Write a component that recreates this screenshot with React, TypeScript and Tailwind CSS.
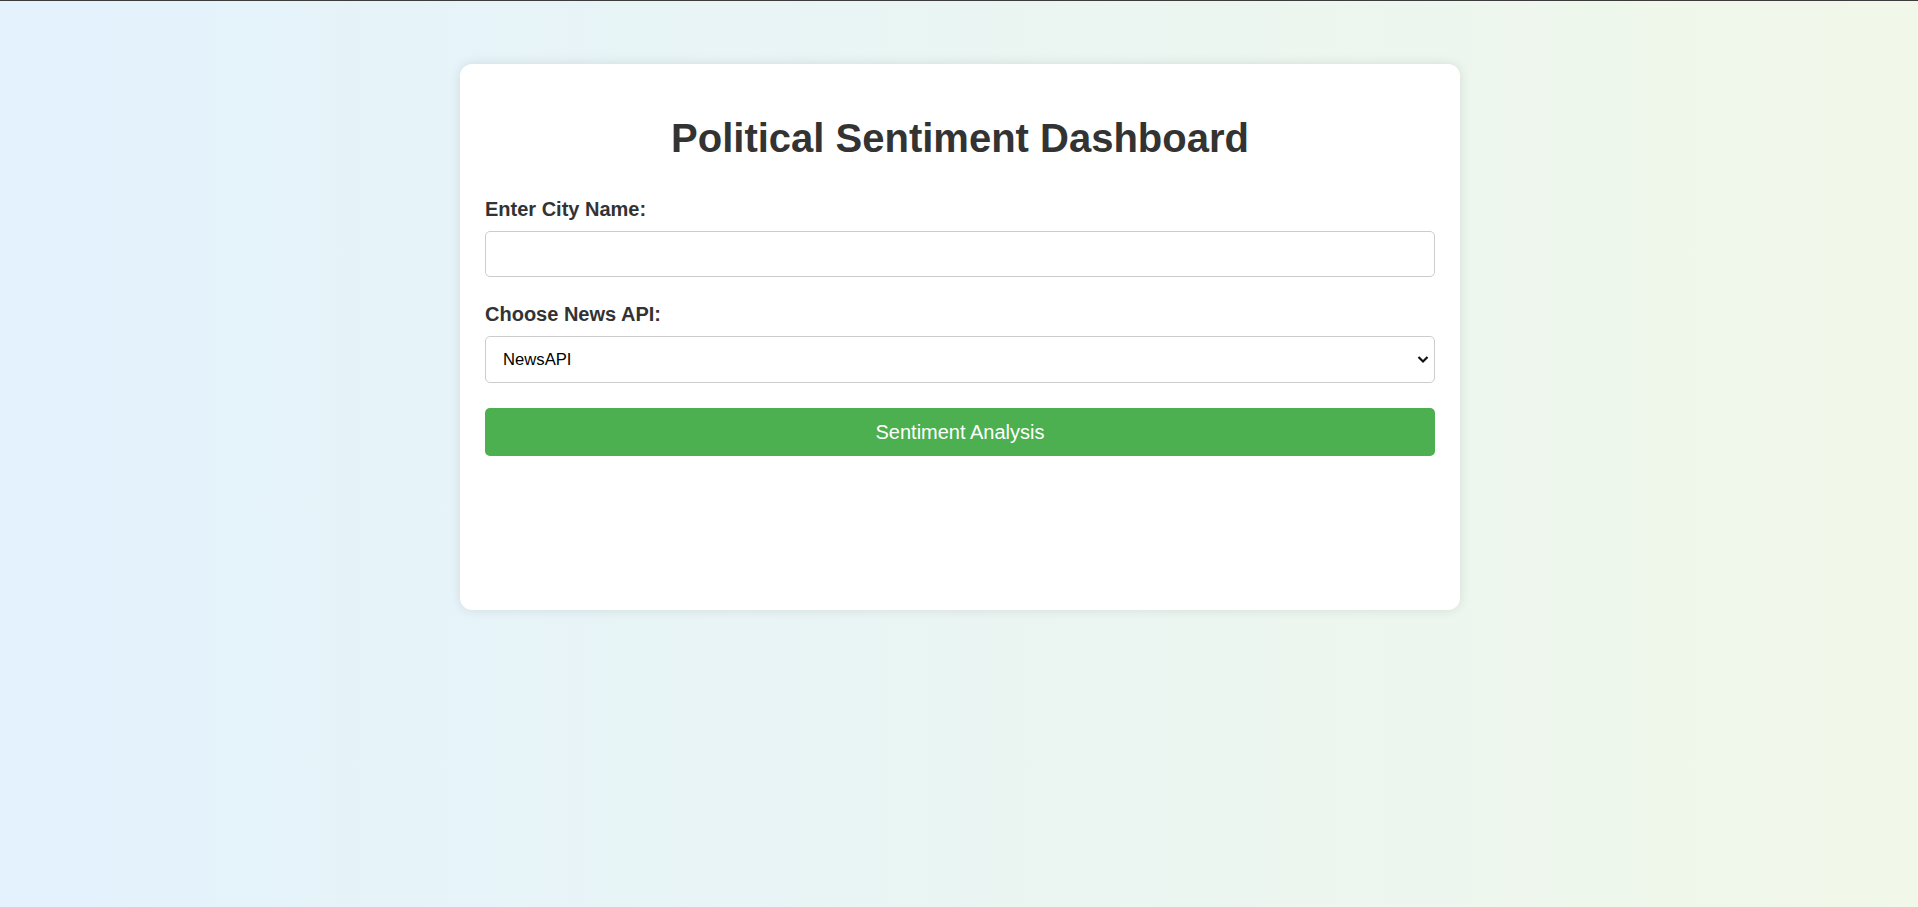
import { useState } from 'react';

export default function App() {
    const [city, setCity] = useState('');
    const [api, setApi] = useState('newsapi');

    return (
        <div className="min-h-screen w-full border-t border-[#3c3c3c] bg-gradient-to-r from-[#e3f2fd] to-[#f1f8e9] pt-[63px] pl-[2px] font-['Liberation_Sans',Arial,sans-serif] text-[#333]">
            <div className="mx-auto flex h-[546px] w-[1000px] flex-col rounded-[12px] bg-white px-[25px] pt-[25px] shadow-[0_0_12px_rgba(0,0,0,0.1)]">
                <h1 className="mt-[26px] mb-[27px] text-center text-[40px] font-bold leading-[46px]">
                    Political Sentiment Dashboard
                </h1>

                <label htmlFor="city" className="mt-[10px] mb-[10px] block text-[20px] font-bold leading-[23px]">
                    Enter City Name:
                </label>
                <input
                    id="city"
                    type="text"
                    value={city}
                    onChange={e => setCity(e.target.value)}
                    className="h-[46px] w-full rounded-[5px] border border-[#ccc] px-[12px] text-[16.67px] text-black outline-none"
                />

                <label htmlFor="api" className="mt-[26px] mb-[10px] block text-[20px] font-bold leading-[23px]">
                    Choose News API:
                </label>
                <div className="relative">
                    <select
                        id="api"
                        value={api}
                        onChange={e => setApi(e.target.value)}
                        className="h-[47px] w-full appearance-none rounded-[5px] border border-[#ccc] bg-white pl-[17px] text-[16.67px] text-black outline-none"
                    >
                        <option value="newsapi">NewsAPI</option>
                        <option value="gnews">GNews</option>
                    </select>
                    <svg
                        className="pointer-events-none absolute right-[6px] top-[19px]"
                        width="12"
                        height="9"
                        viewBox="0 0 12 9"
                        fill="none"
                    >
                        <path d="M1.5 2 L6 6.5 L10.5 2" stroke="#111" strokeWidth="2.2" />
                    </svg>
                </div>

                <button
                    type="button"
                    className="mt-[25px] flex h-[48px] w-full items-center justify-center rounded-[5px] bg-[#4caf50] text-[20px] text-white"
                >
                    Sentiment Analysis
                </button>
            </div>
        </div>
    );
}
